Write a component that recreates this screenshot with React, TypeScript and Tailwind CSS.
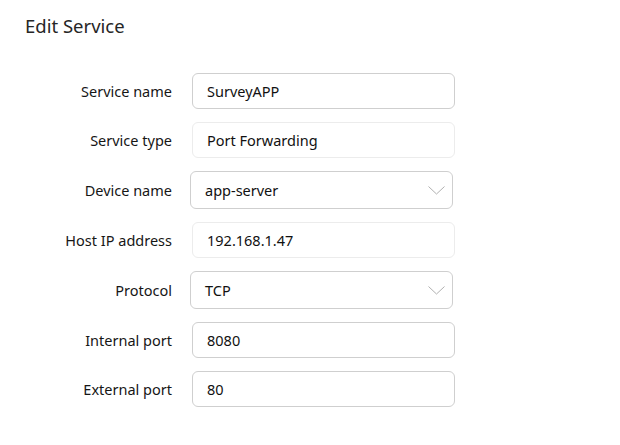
type Field = {
  label: string
  value: string
  kind: 'input' | 'readonly' | 'select'
}

const fields: Field[] = [
  { label: 'Service name', value: 'SurveyAPP', kind: 'input' },
  { label: 'Service type', value: 'Port Forwarding', kind: 'readonly' },
  { label: 'Device name', value: 'app-server', kind: 'select' },
  { label: 'Host IP address', value: '192.168.1.47', kind: 'readonly' },
  { label: 'Protocol', value: 'TCP', kind: 'select' },
  { label: 'Internal port', value: '8080', kind: 'input' },
  { label: 'External port', value: '80', kind: 'input' },
]

function Chevron() {
  return (
    <svg width="17" height="9" viewBox="0 0 17 9" fill="none" className="text-[#b0b0b0]">
      <polyline points="0.5,0.5 8.5,8 16.5,0.5" stroke="currentColor" strokeWidth="1" />
    </svg>
  )
}

function FieldBox({ field }: { field: Field }) {
  if (field.kind === 'select') {
    return (
      <div className="-ml-[2px] flex h-[38px] w-[263px] items-center justify-between rounded-md border border-[#cfcfcf] bg-white pl-[14px] pr-[7px] text-[#111]">
        <span className="pt-[2px]">{field.value}</span>
        <Chevron />
      </div>
    )
  }
  const border = field.kind === 'readonly' ? 'border-[#ececec]' : 'border-[#cfcfcf]'
  return (
    <div
      className={`flex h-[36px] w-[263px] items-center rounded-md border ${border} bg-white px-[14px] text-[#111]`}
    >
      <span className="pt-[2px]">{field.value}</span>
    </div>
  )
}

export default function App() {
  return (
    <div
      className="h-[445px] w-[620px] bg-white text-[14.5px]"
      style={{ fontFamily: '"Noto Sans", "Open Sans", sans-serif' }}
    >
      <h1 className="pl-[25px] pt-[13px] text-[18.5px] leading-[26px] text-[#262626]">Edit Service</h1>
      <div className="mt-[34px] flex flex-col gap-[13px]">
        {fields.map((f) => (
          <div key={f.label} className="flex items-center">
            <label className="w-[172px] pt-[2px] text-right text-[#161616]">{f.label}</label>
            <div className="ml-[20px]">
              <FieldBox field={f} />
            </div>
          </div>
        ))}
      </div>
    </div>
  )
}
